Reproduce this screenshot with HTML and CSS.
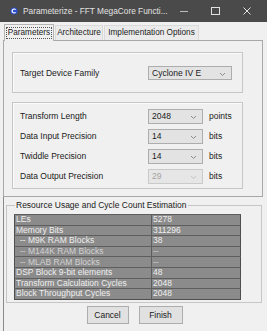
FILE: index.html
```html
<!DOCTYPE html>
<html lang="en">
<head>
  <meta charset="UTF-8" />
  <title>Parameterize - FFT MegaCore Function</title>
  <link rel="stylesheet" href="styles.css">
</head>
<body>

<div class="window">
  <div class="titlebar">
    <svg class="app-icon" width="8" height="8" viewBox="0 0 8 8">
      <circle cx="4" cy="4" r="3.6" fill="#2e4fc9"/>
      <path d="M5.6 2.6 A2 2 0 1 0 5.6 5.4" fill="none" stroke="#fff" stroke-width="1.2"/>
    </svg>
    <span class="title">Parameterize - FFT MegaCore Functi...</span>
    <div class="controls">
      <svg width="8" height="8" viewBox="0 0 8 8"><path d="M0 4.5 H8" stroke="#bdbdbd" stroke-width="1"/></svg>
      <svg width="9" height="8" viewBox="0 0 9 8"><rect x="0.5" y="0.5" width="8" height="7" fill="none" stroke="#e0e0e0"/></svg>
      <svg width="8" height="8" viewBox="0 0 8 8"><path d="M0.5 0.5 L7.5 7.5 M7.5 0.5 L0.5 7.5" stroke="#e0e0e0" stroke-width="1"/></svg>
    </div>
  </div>

  <div class="tabs">
    <div class="tab selected"><span class="focus">Parameters</span></div>
    <div class="tab arch">Architecture</div>
    <div class="tab impl">Implementation Options</div>
  </div>

  <div class="panel">
    <div class="group first">
      <div class="row">
        <span class="label">Target Device Family</span>
        <div class="combo wide">Cyclone IV E<svg class="chev" width="5" height="3" viewBox="0 0 5 3"><path d="M0 0 L2.5 2.5 L5 0" fill="none" stroke="#8a8a8a"/></svg></div>
      </div>
    </div>

    <div class="group second">
      <div class="row">
        <span class="label">Transform Length</span>
        <div class="combo">2048<svg class="chev" width="5" height="3" viewBox="0 0 5 3"><path d="M0 0 L2.5 2.5 L5 0" fill="none" stroke="#8a8a8a"/></svg></div>
        <span class="unit">points</span>
      </div>
      <div class="row">
        <span class="label">Data Input Precision</span>
        <div class="combo">14<svg class="chev" width="5" height="3" viewBox="0 0 5 3"><path d="M0 0 L2.5 2.5 L5 0" fill="none" stroke="#8a8a8a"/></svg></div>
        <span class="unit">bits</span>
      </div>
      <div class="row">
        <span class="label">Twiddle Precision</span>
        <div class="combo">14<svg class="chev" width="5" height="3" viewBox="0 0 5 3"><path d="M0 0 L2.5 2.5 L5 0" fill="none" stroke="#8a8a8a"/></svg></div>
        <span class="unit">bits</span>
      </div>
      <div class="row">
        <span class="label">Data Output Precision</span>
        <div class="combo disabled">29<svg class="chev" width="5" height="3" viewBox="0 0 5 3"><path d="M0 0 L2.5 2.5 L5 0" fill="none" stroke="#c4c4c4"/></svg></div>
        <span class="unit">bits</span>
      </div>
    </div>
  </div>

  <div class="lower">
    <fieldset class="estimate">
      <legend>Resource Usage and Cycle Count Estimation</legend>
      <table class="results">
        <tr><td>LEs</td><td>5278</td></tr>
        <tr><td>Memory Bits</td><td>311296</td></tr>
        <tr><td class="sub">-- M9K RAM Blocks</td><td>38</td></tr>
        <tr class="dim"><td class="sub">-- M144K RAM Blocks</td><td>--</td></tr>
        <tr class="dim"><td class="sub">-- MLAB RAM Blocks</td><td>--</td></tr>
        <tr><td>DSP Block 9-bit elements</td><td>48</td></tr>
        <tr><td>Transform Calculation Cycles</td><td>2048</td></tr>
        <tr><td>Block Throughput Cycles</td><td>2048</td></tr>
      </table>
    </fieldset>

    <div class="buttons">
      <button class="cancel">Cancel</button>
      <button class="finish">Finish</button>
    </div>
  </div>
</div>

</body>
</html>
```

FILE: styles.css
```css
body {
  margin: 0;
  background: #f0f0f0;
  font-family: "Liberation Sans", Arial, sans-serif;
  font-size: 8.5px;
  color: #1a1a1a;
}

.window {
  width: 267px;
  height: 331px;
  overflow: hidden;
}

.titlebar {
  height: 22px;
  background: #4a4a4a;
  display: flex;
  align-items: center;
  padding-left: 10px;
  box-sizing: border-box;
}

.app-icon {
  margin-right: 5px;
}

.title {
  color: #e2e2e2;
  font-size: 8.3px;
}

.controls {
  margin-left: auto;
  display: flex;
  align-items: center;
}

.controls svg:nth-child(1) { margin-right: 23px; }
.controls svg:nth-child(2) { margin-right: 23px; }
.controls svg:nth-child(3) { margin-right: 16px; }

.tabs {
  height: 18px;
  display: flex;
  align-items: flex-end;
  padding-left: 4px;
  box-sizing: border-box;
}

.tab {
  height: 15px;
  line-height: 14px;
  box-sizing: border-box;
  margin-right: 1px;
  border: 1px solid #dadada;
  border-bottom: none;
  background: #ebebeb;
  font-size: 8.2px;
  text-align: center;
  white-space: nowrap;
}

.tab.arch { width: 48px; }
.tab.impl { width: 95px; }

.tab.selected {
  width: 50px;
  height: 17px;
  border-color: #b4b4b4;
  background: #f0f0f0;
  margin-bottom: -1px;
  margin-right: 1px;
  position: relative;
}

.focus {
  display: inline-block;
  line-height: 10px;
  padding: 0 1px;
  margin-top: 2px;
  border: 1px dotted #555;
}

.panel {
  margin: 0 4px 0 3px;
  border: 1px solid #a8a8a8;
  padding: 11px 19px 7px 8px;
}

.group {
  border: 1px solid #c6c6c6;
  box-shadow: inset 1px 1px 0 #fbfbfb;
  padding-left: 7px;
}

.group.first {
  height: 39px;
  display: flex;
  align-items: center;
  margin-bottom: 9px;
}

.group.second {
  padding-top: 3px;
  padding-bottom: 2px;
}

.row {
  display: flex;
  align-items: center;
  height: 20px;
}

.label {
  width: 128px;
  flex: none;
}

.combo {
  position: relative;
  width: 55px;
  height: 15px;
  line-height: 13px;
  box-sizing: border-box;
  padding-left: 3px;
  border: 1px solid #adadad;
  background: #e3e3e3;
}

.combo.wide {
  width: 84px;
  height: 14px;
  line-height: 12px;
}

.combo.disabled {
  color: #a3a3a3;
  border-color: #cacaca;
  background: #e6e6e6;
}

.chev {
  position: absolute;
  right: 6px;
  top: 6px;
}

.unit {
  margin-left: 6px;
}

.lower {
  border-left: 1px solid #8a8a8a;
  margin-left: 3px;
  height: 134px;
  padding-top: 3px;
}

.estimate {
  margin: 0 1px 0 2px;
  width: 256px;
  box-sizing: border-box;
  border: 1px solid #c6c6c6;
  padding: 0 0 2px 7px;
}

.estimate legend {
  padding: 0 1px;
  margin-left: 1px;
  line-height: 10px;
}

.results {
  margin-top: 4px;
  width: 227px;
  border-collapse: collapse;
  background: #8b8b8b;
  border: 1px solid #4e4e4e;
  color: #efefef;
}

.results td {
  height: 9.6px;
  line-height: 9px;
  padding: 0 0 0 1px;
  border-top: 1px solid #5e5e5e;
  white-space: nowrap;
}

.results td:first-child {
  width: 131px;
  border-right: 1px solid #5e5e5e;
}

.results td.sub {
  padding-left: 5px;
}

.results tr.dim td {
  color: #d2d2d2;
}

.buttons {
  display: flex;
  justify-content: center;
  gap: 10px;
  margin-top: 3px;
  padding-right: 2px;
}

button {
  height: 18px;
  border: 1px solid #adadad;
  background: #e1e1e1;
  font-family: "Liberation Sans", Arial, sans-serif;
  font-size: 8.5px;
  color: #1a1a1a;
  padding: 0;
}

.cancel { width: 42px; }
.finish { width: 44px; }
```
